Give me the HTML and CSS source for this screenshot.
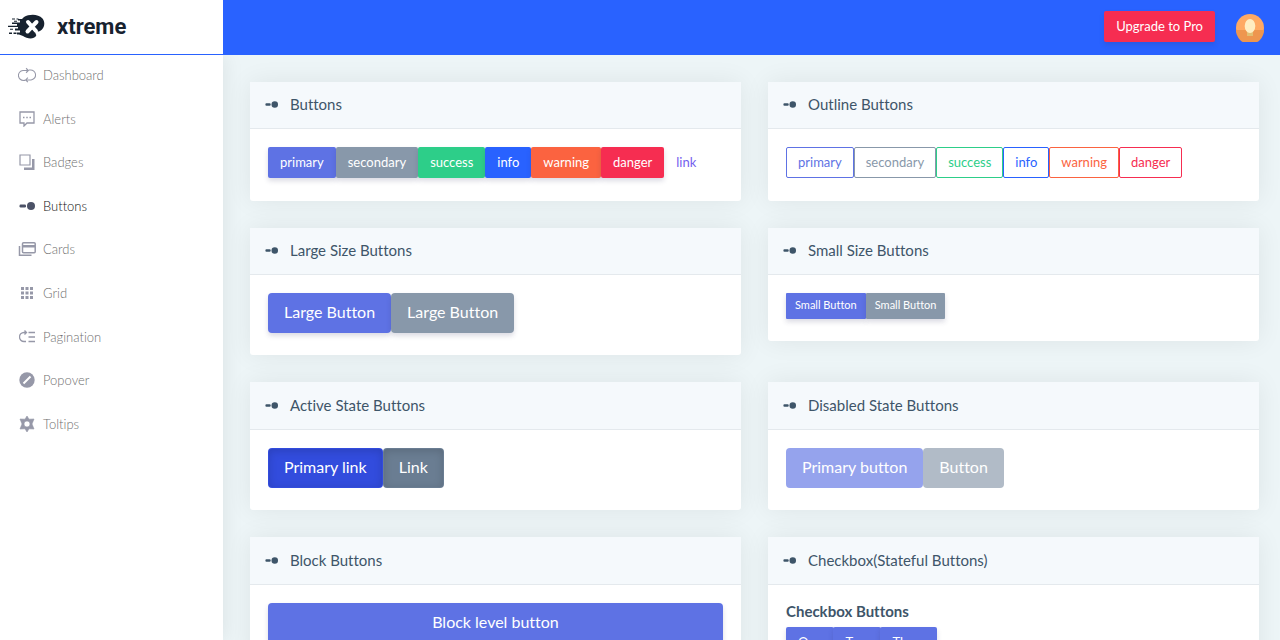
FILE: index.html
```html
<!DOCTYPE html>
<html lang="en">
<head>
<meta charset="utf-8">
<meta name="viewport" content="width=device-width, initial-scale=1">
<title>Xtreme - Buttons</title>
<link rel="stylesheet" href="styles.css">
</head>
<body>
<svg class="sprite" aria-hidden="true">
  <symbol id="toggle" viewBox="0 0 16 16"><rect x="0.500" y="6.500" width="6.500" height="3" rx="1.200"/><circle cx="12" cy="8" r="4"/></symbol>
</svg>
<div class="shell">
  <header class="topbar">
    <a class="brand" href="#">
      <svg class="brand-mark" viewBox="0 0 38 26" aria-hidden="true">
        <path d="M17 3C22 0 31-.5 35.500 4.500C39 9 37 15 33 17C31 18 30 17 29 18C27.500 20 30 20 29 22C27 25.500 20 25 16 22L12 20.500H10V18.500H13V16.500H8V14.500H11V13H1V11.800H10V10H5V8.500H13V6.500H11V5H15Z"/>
        <path d="M5 4.500h3v1H5zM9.500 4.500h2v1h-2zM7 6.700h3v1H7zM3 14.800h3v1H3zM2 18.500h3v1.500H2zM6.500 18.500h3V20h-3z"/>
        <path d="M21 8L29 17M29.500 8L20.500 17.500" stroke="#fff" stroke-width="4" stroke-linecap="round"/>
      </svg>
      <span>xtreme</span>
    </a>
    <div class="actions">
      <button class="btn danger upgrade" type="button">Upgrade to Pro</button>
      <button class="avatar" type="button" aria-label="Account">
        <svg viewBox="0 0 28 28" aria-hidden="true">
          <circle cx="14" cy="14" r="14" fill="#ffa963"/>
          <path fill="#ee964f" d="M0 16h28a14 14 0 0 1-28 0z"/>
          <rect x="11" y="17" width="6" height="5" fill="#e2bf73"/>
          <ellipse cx="14" cy="12" rx="5.300" ry="7" fill="#ffedc2"/>
        </svg>
      </button>
    </div>
  </header>
  <nav class="sidebar" aria-label="Main">
    <ul>
      <li><a href="#"><svg class="wide line" viewBox="0 0 20 16" stroke-width="1.200"><path d="M8 14H6.500A5.500 5.500 0 0 1 5.500 3H11M9 .5L11.500 3L9 5.500M12 2.500h1.500A5.500 5.500 0 0 1 14.500 13.500H8.500M11 11L8.500 13.500L11 16"/></svg>Dashboard</a></li>
      <li><a href="#"><svg class="line" viewBox="0 0 16 16"><path stroke-width="1.300" d="M1 1h14v11H8l-3 3v-3H1z"/><path stroke-width="1.500" d="M4 6.500h1.500M7.250 6.500h1.500M10.500 6.500H12"/></svg>Alerts</a></li>
      <li><a href="#"><svg viewBox="0 0 16 16"><path fill="none" stroke="currentColor" stroke-width="1.200" d="M1 1h10v10H1z"/><path d="M13 5h2.500v11H5v-2.500h8z"/></svg>Badges</a></li>
      <li><a class="current" href="#" aria-current="page"><svg><use href="#toggle"/></svg>Buttons</a></li>
      <li><a href="#"><svg class="wide" viewBox="0 0 18 16"><path fill="none" stroke="currentColor" stroke-width="1.500" d="M1.500 5v9.200h12M5.500 1.700h10.700a1 1 0 0 1 1 1v8a1 1 0 0 1-1 1H5.500a1 1 0 0 1-1-1v-8a1 1 0 0 1 1-1z"/><path d="M4 4h13v2.500H4z"/></svg>Cards</a></li>
      <li><a href="#"><svg viewBox="0 0 16 16"><path d="M2 2h3v3H2zM6.500 2h3v3h-3zM11 2h3v3h-3zM2 6.500h3v3H2zM6.500 6.500h3v3h-3zM11 6.500h3v3h-3zM2 11h3v3H2zM6.500 11h3v3h-3zM11 11h3v3h-3z"/></svg>Grid</a></li>
      <li><a href="#"><svg class="line" viewBox="0 0 16 16" stroke-width="1.300"><path d="M7 12.500H5a4.500 4.500 0 0 1 0-9h2M5.500 1.500l2 2l-2 2M9.500 3.500H16M9.500 8H16M9.500 12.500H16"/></svg>Pagination</a></li>
      <li><a href="#"><svg viewBox="0 0 16 16"><circle cx="8" cy="8" r="7.700"/><path stroke="#fff" stroke-width="2" d="M4.500 11.500L11.500 4.500"/></svg>Popover</a></li>
      <li><a href="#"><svg viewBox="0 0 16 16"><path fill-rule="evenodd" d="M8 0L10 3.200L15 3L13 8L15 13L10 12.800L8 16L6 12.800L1 13L3 8L1 3L6 3.200ZM8 5a3 3 0 1 0 0 6 3 3 0 0 0 0-6z" stroke="currentColor" stroke-width=".6" stroke-linejoin="round"/></svg>Toltips</a></li>
    </ul>
  </nav>
  <main class="content">
    <section class="card">
      <h2><svg><use href="#toggle"/></svg>Buttons</h2>
      <div class="card-body">
        <button class="btn primary" type="button">primary</button><button class="btn secondary" type="button">secondary</button><button class="btn success" type="button">success</button><button class="btn info" type="button">info</button><button class="btn warning" type="button">warning</button><button class="btn danger" type="button">danger</button><button class="btn link" type="button">link</button>
      </div>
    </section>
    <section class="card">
      <h2><svg><use href="#toggle"/></svg>Outline Buttons</h2>
      <div class="card-body">
        <button class="btn outline-primary" type="button">primary</button><button class="btn outline-secondary" type="button">secondary</button><button class="btn outline-success" type="button">success</button><button class="btn outline-info" type="button">info</button><button class="btn outline-warning" type="button">warning</button><button class="btn outline-danger" type="button">danger</button>
      </div>
    </section>
    <section class="card">
      <h2><svg><use href="#toggle"/></svg>Large Size Buttons</h2>
      <div class="card-body">
        <button class="btn large primary" type="button">Large Button</button><button class="btn large secondary" type="button">Large Button</button>
      </div>
    </section>
    <section class="card">
      <h2><svg><use href="#toggle"/></svg>Small Size Buttons</h2>
      <div class="card-body">
        <button class="btn small primary" type="button">Small Button</button><button class="btn small secondary" type="button">Small Button</button>
      </div>
    </section>
    <section class="card tall">
      <h2><svg><use href="#toggle"/></svg>Active State Buttons</h2>
      <div class="card-body">
        <button class="btn large primary active" type="button">Primary link</button><button class="btn large secondary active" type="button">Link</button>
      </div>
    </section>
    <section class="card tall">
      <h2><svg><use href="#toggle"/></svg>Disabled State Buttons</h2>
      <div class="card-body">
        <button class="btn large primary" type="button" disabled>Primary button</button><button class="btn large secondary" type="button" disabled>Button</button>
      </div>
    </section>
    <section class="card tall">
      <h2><svg><use href="#toggle"/></svg>Block Buttons</h2>
      <div class="card-body">
        <button class="btn large primary block" type="button">Block level button</button>
      </div>
    </section>
    <section class="card tall">
      <h2><svg><use href="#toggle"/></svg>Checkbox(Stateful Buttons)</h2>
      <div class="card-body stacked">
        <h3>Checkbox Buttons</h3>
        <div class="group">
          <button class="btn primary" type="button">One</button><button class="btn primary" type="button">Two</button><button class="btn primary" type="button">Three</button>
        </div>
      </div>
    </section>
  </main>
</div>
</body>
</html>
```
FILE: styles.css
```css
* { box-sizing: border-box; }

body {
  margin: 0;
  font-family: Lato, "Open Sans", sans-serif;
  font-size: 14px;
  font-variant-ligatures: none;
  color: #3e5569;
  background: #edf5f7;
}

svg { fill: currentColor; flex: none; }
.line { fill: none; stroke: currentColor; }
.sprite { display: none; }

.shell {
  display: grid;
  grid-template-columns: 223px 1fr;
  grid-template-rows: 55px 1fr;
  height: 100vh;
  overflow: hidden;
}

.topbar {
  grid-column: 1 / -1;
  display: flex;
  justify-content: space-between;
  background: #2962ff;
  z-index: 2;
}

.brand {
  display: flex;
  align-items: center;
  gap: 12px;
  width: 223px;
  padding-left: 7px;
  margin-bottom: 1px;
  background: #fff;
  color: #17222f;
  font-family: Roboto, sans-serif;
  font-size: 22px;
  font-weight: 700;
  line-height: 24px;
  text-decoration: none;
}
.brand-mark { width: 38px; height: 26px; }

.actions {
  display: flex;
  align-items: center;
  gap: 21px;
  padding-right: 16px;
}
.upgrade { margin-bottom: 2px; }
.avatar {
  width: 28px;
  height: 28px;
  padding: 0;
  border: 0;
  border-radius: 50%;
  background: none;
}
.avatar svg { display: block; width: 28px; height: 28px; }

.sidebar {
  background: #fff;
  box-shadow: 1px 0 20px rgba(0, 0, 0, .08);
  z-index: 1;
}
.sidebar ul {
  display: grid;
  grid-auto-rows: 1fr;
  height: 392px;
  margin: 0;
  padding: 0;
  list-style: none;
}
.sidebar a {
  display: flex;
  align-items: center;
  gap: 8px;
  height: 100%;
  padding: 0 0 3px 19px;
  color: #707070;
  font-size: 13px;
  font-weight: 300;
  text-decoration: none;
}
.sidebar svg { width: 16px; height: 16px; color: #9698a8; }
.sidebar .wide { width: 18px; margin: 0 -1px; }
.sidebar .current { color: #111; }
.sidebar .current svg { color: #4c5267; }

.content {
  display: grid;
  grid-template-columns: 1fr 1fr;
  align-items: start;
  align-content: start;
  gap: 27px;
  padding: 27px 21px 27px 27px;
  overflow-y: auto;
  scrollbar-width: none;
}

.card {
  background: #fff;
  border-radius: 3px;
  box-shadow: 0 0 26px rgba(0, 0, 0, .07);
}
.card h2 {
  display: flex;
  align-items: center;
  gap: 12px;
  margin: 0;
  padding: 11px 15px 13px;
  background: #f5f9fc;
  border-bottom: 1px solid #e4e9ed;
  font-size: 15px;
  font-weight: 400;
  line-height: 22px;
}
.card h2 svg { width: 13px; height: 13px; }
.tall h2 { padding: 12px 15px 13px; }
.card-body {
  display: flex;
  align-items: flex-start;
  min-height: 72px;
  padding: 18px 18px 22px;
}
.card-body:has(.small) { min-height: 0; }
.stacked { flex-direction: column; }
.stacked h3 {
  margin: 0 0 8px;
  font-size: 15px;
  font-weight: 700;
  line-height: 16px;
}
.group { display: flex; }
.group .btn + .btn { margin-left: -1px; }

.btn {
  padding: 5px 11px;
  border: 1px solid transparent;
  border-radius: 2px;
  background: transparent;
  font: 400 13px/19px Lato, "Open Sans", sans-serif;
  font-variant-ligatures: none;
  color: #fff;
}
.large {
  padding: 7px 15px 9px;
  border-radius: 4px;
  font-size: 16px;
  line-height: 22px;
}
.small {
  padding: 3px 8px 5px;
  border-radius: 1px;
  font-size: 11px;
  line-height: 16px;
}
.block { flex: 1; }

.primary { background: #5e72e4; }
.secondary { background: #8898aa; }
.success { background: #2dce89; }
.info { background: #2962ff; }
.warning { background: #fb6340; }
.danger { background: #f62d51; }
.primary, .secondary, .success, .info, .warning, .danger {
  box-shadow: 0 3px 5px rgba(50, 50, 93, .17);
}
.link { color: #7460ee; }

.primary.active { background: #324cdd; }
.secondary.active { background: #6a7d92; }
.active { box-shadow: inset 0 2px 9px rgba(0, 0, 0, .15); }
.btn:disabled { opacity: .65; box-shadow: none; }

.outline-primary { color: #5e72e4; border-color: currentColor; }
.outline-secondary { color: #8898aa; border-color: currentColor; }
.outline-success { color: #2dce89; border-color: currentColor; }
.outline-info { color: #2962ff; border-color: currentColor; }
.outline-warning { color: #fb6340; border-color: currentColor; }
.outline-danger { color: #f62d51; border-color: currentColor; }
```
